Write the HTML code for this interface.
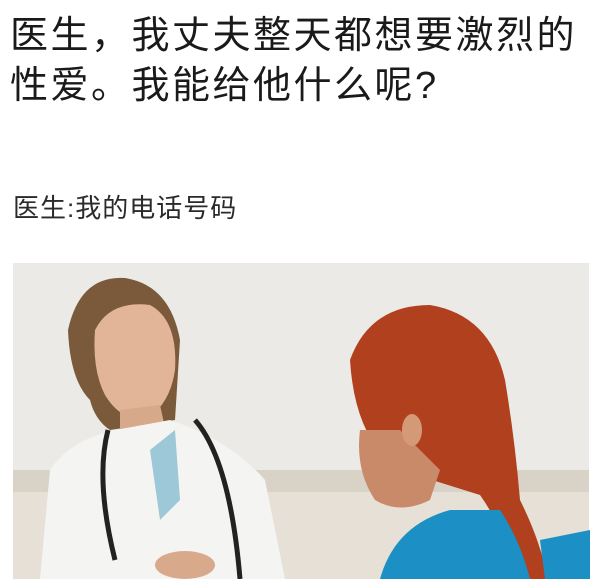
<!DOCTYPE html>
<html><head><meta charset="utf-8">
<style>
html,body{margin:0;padding:0;background:#fff;width:600px;height:579px;overflow:hidden;position:relative}
.t{position:absolute;font-family:"Liberation Sans","Noto Sans CJK SC",sans-serif;color:#1a1a1a;white-space:nowrap}
#l1{left:10px;top:10px;font-size:38px;letter-spacing:2.5px;line-height:52px}
#l2{left:10px;top:60px;font-size:38px;letter-spacing:2.5px;line-height:52px}
#l3{left:13px;top:191px;font-size:26px;letter-spacing:1px;line-height:34px;color:#2a2a2a}
svg{position:absolute;left:0;top:0}
</style></head><body>
<div class="t" id="l1">医生，我丈夫整天都想要激烈的</div>
<div class="t" id="l2">性爱。我能给他什么呢?</div>
<div class="t" id="l3">医生:我的电话号码</div>
<svg width="600" height="579" viewBox="0 0 600 579">
<rect x="13" y="263" width="576" height="316" fill="#ebeae6"/>
<rect x="13" y="470" width="576" height="22" fill="#d9d3c7"/>
<rect x="13" y="492" width="576" height="87" fill="#e6e0d6"/>
<path d="M68 330 Q80 275 125 278 Q170 285 180 340 L175 420 L110 430 Q95 420 90 400 Q70 380 68 330Z" fill="#7a5a3a"/>
<path d="M95 330 Q110 300 150 305 Q178 320 175 370 Q170 405 145 420 Q120 420 105 395 Q92 370 95 330Z" fill="#e2b498"/>
<path d="M120 410 L160 405 L170 450 L120 455Z" fill="#d8a88a"/>
<path d="M40 579 L50 470 Q70 440 115 430 L170 420 Q230 440 265 480 L285 579Z" fill="#f4f4f2"/>
<path d="M150 450 L175 430 L180 500 L160 520Z" fill="#9cc8d8"/>
<path d="M108 430 Q95 480 115 560" stroke="#222" stroke-width="5" fill="none"/>
<path d="M195 420 Q230 460 240 579" stroke="#222" stroke-width="5" fill="none"/>
<ellipse cx="185" cy="565" rx="30" ry="14" fill="#d9a98c"/>
<path d="M350 360 Q370 305 430 305 Q490 315 505 380 Q515 440 520 500 Q540 540 548 579 L515 579 Q505 530 480 495 L400 470 Q355 440 350 360Z" fill="#b0401e"/>
<path d="M360 430 Q355 470 375 500 Q400 515 430 500 L440 470 Q420 450 400 430Z" fill="#c98a6a"/>
<ellipse cx="412" cy="430" rx="10" ry="16" fill="#d49a78"/>
<path d="M380 579 Q395 525 450 510 L500 510 Q520 540 530 579Z" fill="#1c8fc4"/>
<path d="M540 540 L590 530 L590 579 L545 579Z" fill="#1c8fc4"/>
</svg>
</body></html>
